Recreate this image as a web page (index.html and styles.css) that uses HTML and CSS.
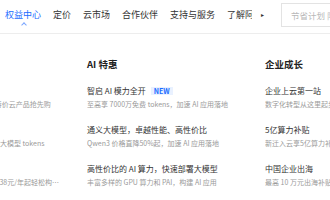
FILE: index.html
```html
<!DOCTYPE html>
<html lang="zh-CN">
<head>
<meta charset="utf-8">
<title>权益中心</title>
<link rel="stylesheet" href="styles.css">
</head>
<body>
<header class="topbar">
  <nav class="nav">
    <a class="nav-item active">权益中心</a>
    <a class="nav-item">定价</a>
    <a class="nav-item">云市场</a>
    <a class="nav-item">合作伙伴</a>
    <a class="nav-item">支持与服务</a>
    <a class="nav-item">了解阿里云</a>
  </nav>
  <span class="nav-more">▸</span>
  <div class="search">节省计划 限时特惠</div>
</header>
<main class="panel">
  <section class="col">
    <h3 class="col-title">新人特惠</h3>
    <div class="item">
      <div class="item-title">新人专区</div>
      <div class="item-desc">新人专享，云服务器 ECS 等特价云产品抢先购</div>
    </div>
    <div class="item">
      <div class="item-title">免费试用</div>
      <div class="item-desc">新用户免费领取 1 亿通义千问大模型 tokens</div>
    </div>
    <div class="item">
      <div class="item-title">云服务器</div>
      <div class="item-desc">轻量应用服务器 2 核 2G 低至 38元/年起轻松构建网站</div>
    </div>
  </section>
  <section class="col">
    <h3 class="col-title">AI 特惠</h3>
    <div class="item">
      <div class="item-title">智启 AI 模力全开 <span class="badge">NEW</span></div>
      <div class="item-desc">至高享 7000万免费 tokens，加速 AI 应用落地</div>
    </div>
    <div class="item">
      <div class="item-title">通义大模型，卓越性能、高性价比</div>
      <div class="item-desc">Qwen3 价格直降50%起，加速 AI 应用落地</div>
    </div>
    <div class="item">
      <div class="item-title">高性价比的 AI 算力，快速部署大模型</div>
      <div class="item-desc">丰富多样的 GPU 算力和 PAI，构建 AI 应用</div>
    </div>
  </section>
  <section class="col">
    <h3 class="col-title">企业成长</h3>
    <div class="item">
      <div class="item-title">企业上云第一站</div>
      <div class="item-desc">数字化转型从这里起步</div>
    </div>
    <div class="item">
      <div class="item-title">5亿算力补贴</div>
      <div class="item-desc">新迁入云享5亿算力补贴</div>
    </div>
    <div class="item">
      <div class="item-title">中国企业出海</div>
      <div class="item-desc">最高 10 万元出海补贴</div>
    </div>
  </section>
</main>
</body>
</html>
```
FILE: styles.css
```css
* {
  box-sizing: border-box;
  margin: 0;
  padding: 0;
}

html,
body {
  overflow: hidden;
  background: #fff;
}

body {
  width: 330px;
  height: 200px;
  font-family: "Noto Sans CJK SC", "Noto Sans", sans-serif;
  color: #333;
}

.topbar {
  display: flex;
  align-items: center;
  height: 34px;
  padding: 3px 0 6px 5px;
  border-bottom: 1px solid #ededed;
}

.nav {
  display: flex;
  align-items: center;
  align-self: stretch;
  gap: 12px;
  width: 247px;
  flex: none;
  overflow: hidden;
  white-space: nowrap;
  font-size: 9px;
  line-height: 12px;
}

.nav-item {
  flex: none;
  position: relative;
  color: #333;
}

.nav-item.active {
  color: #1b6cff;
}

.nav-item.active::after {
  content: "";
  position: absolute;
  left: 50%;
  top: calc(100% + 2px);
  width: 3px;
  height: 3px;
  margin-left: -1.5px;
  border-left: 1px solid #7aa6ff;
  border-top: 1px solid #7aa6ff;
  transform: rotate(45deg);
}

.nav-more {
  flex: none;
  margin-left: 9px;
  font-size: 6px;
  line-height: 12px;
  color: #333;
}

.search {
  flex: none;
  display: flex;
  align-items: center;
  width: 120px;
  height: 24px;
  margin-left: 17px;
  padding-left: 9px;
  border: 1px solid #e3e3e3;
  font-size: 8.5px;
  color: #b8b8b8;
  white-space: nowrap;
}

.panel {
  display: flex;
  margin-left: -91px;
  padding-top: 24px;
}

.col {
  flex: none;
  width: 178px;
  padding-right: 27px;
}

.col-title {
  font-size: 9.5px;
  line-height: 12px;
  font-weight: 700;
  color: #222;
  margin-bottom: 15px;
}

.item {
  margin-bottom: 15px;
}

.item-title {
  display: flex;
  align-items: center;
  gap: 5px;
  font-size: 8px;
  line-height: 11px;
  color: #333;
  white-space: nowrap;
}

.badge {
  font-size: 7px;
  line-height: 8px;
  font-weight: 700;
  color: #1b6cff;
  background: #e9f1ff;
  padding: 0 3px;
}

.item-desc {
  margin-top: 3px;
  font-size: 7px;
  line-height: 10px;
  color: #9a9a9a;
  white-space: nowrap;
  overflow: hidden;
  text-overflow: ellipsis;
}
```
